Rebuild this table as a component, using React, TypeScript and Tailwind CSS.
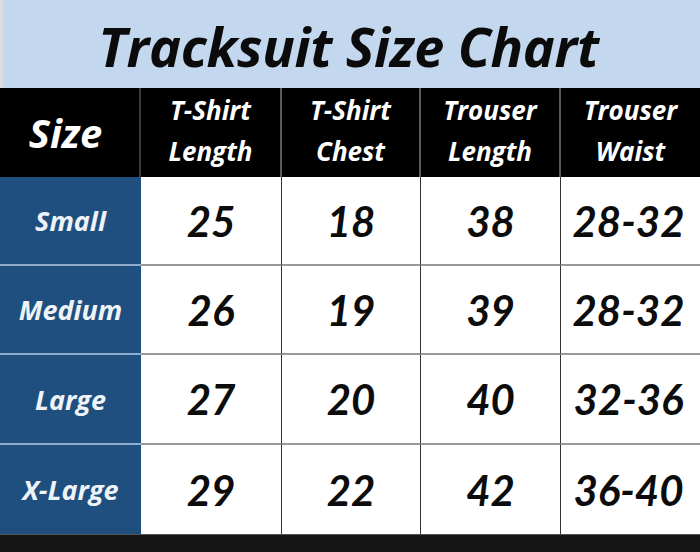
const cols = ["T-Shirt|Length", "T-Shirt|Chest", "Trouser|Length", "Trouser|Waist"];

const rows = [
  { size: "Small", values: ["25", "18", "38", "28-32"] },
  { size: "Medium", values: ["26", "19", "39", "28-32"] },
  { size: "Large", values: ["27", "20", "40", "32-36"] },
  { size: "X-Large", values: ["29", "22", "42", "36-40"] },
];

const lato = { fontFamily: "Lato, 'Open Sans', sans-serif" };
const open = { fontFamily: "'Open Sans', Lato, sans-serif" };

export default function App() {
  return (
    <div className="w-[700px] h-[552px] bg-white overflow-hidden italic font-bold" style={lato}>
      {/* Title */}
      <div className="h-[88px] bg-[#c3d8ef] border-l-[3px] border-[#d9dde2] flex items-center justify-center">
        <h1 className="text-[54px] leading-none tracking-[-0.3px] text-[#0b0b0b] pt-1 pr-[6px]" style={open}>
          Tracksuit Size Chart
        </h1>
      </div>

      {/* Header */}
      <div className="grid grid-cols-[141px_141px_139px_140px_139px] h-[89px] bg-black text-white" style={open}>
        <div className="flex items-center justify-center text-[40px] leading-none pr-2 border-r-2 border-[#3a3a3a]">
          Size
        </div>
        {cols.map((c, i) => {
          const [a, b] = c.split("|");
          return (
            <div
              key={c}
              className={
                "flex flex-col items-center justify-center text-[26px] leading-[41px] pb-1 " +
                (i < 3 ? "border-r-2 border-[#5a5a5a]" : "")
              }
            >
              <span>{a}</span>
              <span>{b}</span>
            </div>
          );
        })}
      </div>

      {/* Body */}
      {rows.map((r, ri) => (
        <div
          key={r.size}
          className={
            "grid grid-cols-[141px_141px_139px_140px_139px] " +
            (ri === 2 ? "h-[90px]" : "h-[89px]")
          }
        >
          <div
            className={
              "bg-[#1f4f7e] text-[#eef3f8] flex items-center justify-center text-[27px] leading-none " +
              (ri < 3 ? "border-b-2 border-[#8eacc9]" : "")
            }
            style={open}
          >
            {r.size}
          </div>
          {r.values.map((v, vi) => (
            <div
              key={vi}
              className={
                "flex items-center justify-center text-[42px] leading-none text-[#0c0c0c] " +
                (vi < 3 ? "border-r border-[#333] " : "") +
                (ri < 3 ? "border-b-2 border-b-[#9a9a9a]" : "") +
                (vi === 3 ? " pr-1" : "")
              }
            >
              {v}
            </div>
          ))}
        </div>
      ))}

      {/* Bottom bar */}
      <div className="h-[18px] bg-[#161616] border-t border-[#555]" />
    </div>
  );
}
